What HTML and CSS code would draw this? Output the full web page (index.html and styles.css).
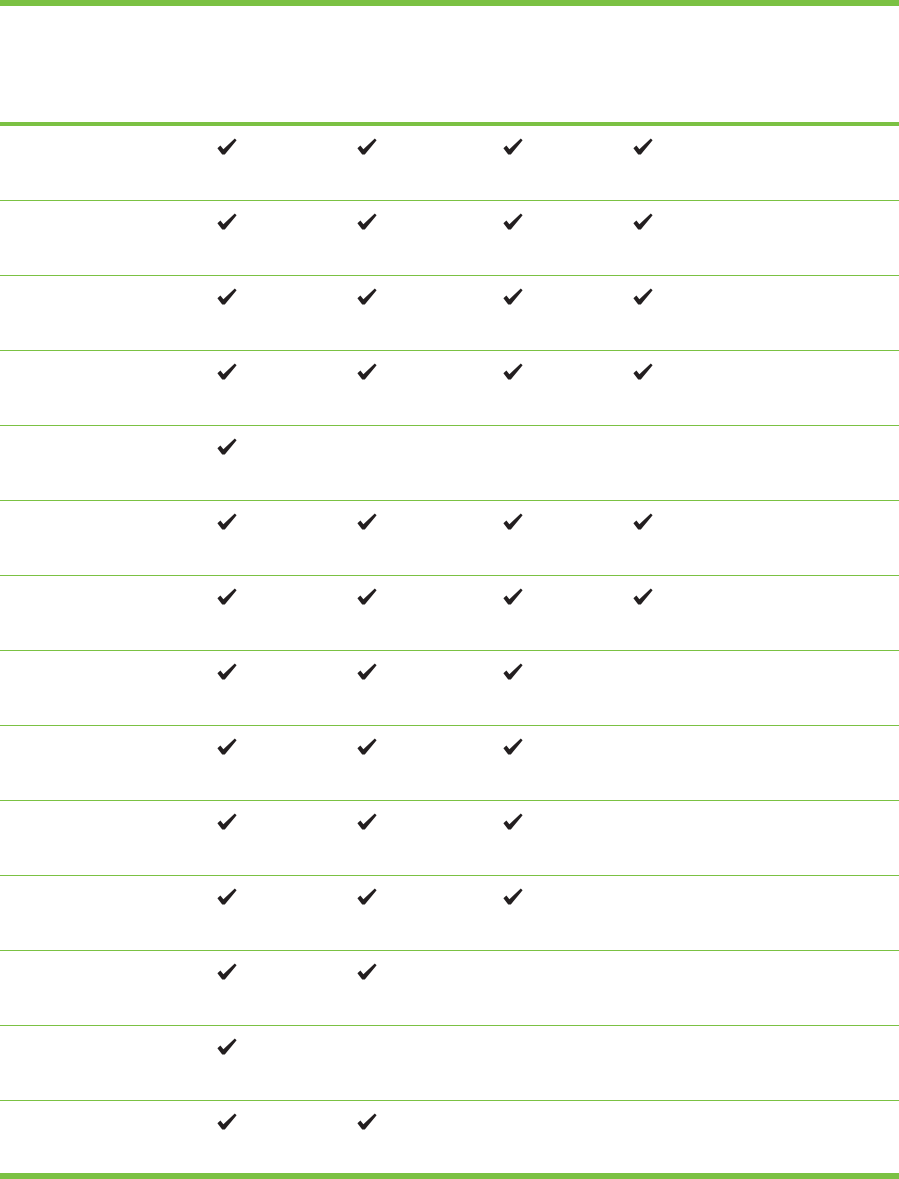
FILE: index.html
```html
<!DOCTYPE html>
<html lang="en">
<head>
<meta charset="utf-8">
<title>Feature matrix</title>
<link rel="stylesheet" href="styles.css">
</head>
<body>
<svg class="defs" width="0" height="0" aria-hidden="true">
  <symbol id="chk" viewBox="0 0 20 17">
    <path d="M0.4 10.2 L3.4 7.6 L6.4 11.2 L17.8 0.4 L19.6 2.2 L7.8 16.6 L5.2 16.6 Z" fill="#231f20"/>
  </symbol>
</svg>
<div class="page">
  <div class="topbar"></div>
  <div class="header"></div>
  <div class="table">
    <div class="row"><span class="label"></span><span class="cell"><svg class="check"><use href="#chk"/></svg></span><span class="cell"><svg class="check"><use href="#chk"/></svg></span><span class="cell"><svg class="check"><use href="#chk"/></svg></span><span class="cell"><svg class="check"><use href="#chk"/></svg></span></div>
    <div class="row"><span class="label"></span><span class="cell"><svg class="check"><use href="#chk"/></svg></span><span class="cell"><svg class="check"><use href="#chk"/></svg></span><span class="cell"><svg class="check"><use href="#chk"/></svg></span><span class="cell"><svg class="check"><use href="#chk"/></svg></span></div>
    <div class="row"><span class="label"></span><span class="cell"><svg class="check"><use href="#chk"/></svg></span><span class="cell"><svg class="check"><use href="#chk"/></svg></span><span class="cell"><svg class="check"><use href="#chk"/></svg></span><span class="cell"><svg class="check"><use href="#chk"/></svg></span></div>
    <div class="row"><span class="label"></span><span class="cell"><svg class="check"><use href="#chk"/></svg></span><span class="cell"><svg class="check"><use href="#chk"/></svg></span><span class="cell"><svg class="check"><use href="#chk"/></svg></span><span class="cell"><svg class="check"><use href="#chk"/></svg></span></div>
    <div class="row"><span class="label"></span><span class="cell"><svg class="check"><use href="#chk"/></svg></span><span class="cell"></span><span class="cell"></span><span class="cell"></span></div>
    <div class="row"><span class="label"></span><span class="cell"><svg class="check"><use href="#chk"/></svg></span><span class="cell"><svg class="check"><use href="#chk"/></svg></span><span class="cell"><svg class="check"><use href="#chk"/></svg></span><span class="cell"><svg class="check"><use href="#chk"/></svg></span></div>
    <div class="row"><span class="label"></span><span class="cell"><svg class="check"><use href="#chk"/></svg></span><span class="cell"><svg class="check"><use href="#chk"/></svg></span><span class="cell"><svg class="check"><use href="#chk"/></svg></span><span class="cell"><svg class="check"><use href="#chk"/></svg></span></div>
    <div class="row"><span class="label"></span><span class="cell"><svg class="check"><use href="#chk"/></svg></span><span class="cell"><svg class="check"><use href="#chk"/></svg></span><span class="cell"><svg class="check"><use href="#chk"/></svg></span><span class="cell"></span></div>
    <div class="row"><span class="label"></span><span class="cell"><svg class="check"><use href="#chk"/></svg></span><span class="cell"><svg class="check"><use href="#chk"/></svg></span><span class="cell"><svg class="check"><use href="#chk"/></svg></span><span class="cell"></span></div>
    <div class="row"><span class="label"></span><span class="cell"><svg class="check"><use href="#chk"/></svg></span><span class="cell"><svg class="check"><use href="#chk"/></svg></span><span class="cell"><svg class="check"><use href="#chk"/></svg></span><span class="cell"></span></div>
    <div class="row"><span class="label"></span><span class="cell"><svg class="check"><use href="#chk"/></svg></span><span class="cell"><svg class="check"><use href="#chk"/></svg></span><span class="cell"><svg class="check"><use href="#chk"/></svg></span><span class="cell"></span></div>
    <div class="row"><span class="label"></span><span class="cell"><svg class="check"><use href="#chk"/></svg></span><span class="cell"><svg class="check"><use href="#chk"/></svg></span><span class="cell"></span><span class="cell"></span></div>
    <div class="row"><span class="label"></span><span class="cell"><svg class="check"><use href="#chk"/></svg></span><span class="cell"></span><span class="cell"></span><span class="cell"></span></div>
    <div class="row last"><span class="label"></span><span class="cell"><svg class="check"><use href="#chk"/></svg></span><span class="cell"><svg class="check"><use href="#chk"/></svg></span><span class="cell"></span><span class="cell"></span></div>
  </div>
  <div class="bottombar"></div>
</div>
</body>
</html>
```
FILE: styles.css
```css
* { box-sizing: border-box; }
html, body { margin: 0; padding: 0; background: #ffffff; }
body { font-family: "Liberation Sans", Arial, sans-serif; }
.defs { position: absolute; width: 0; height: 0; overflow: hidden; }
.page { width: 899px; height: 1179px; display: flex; flex-direction: column; }
.topbar { height: 6px; background: #7bc143; flex: none; }
.header { height: 120px; border-bottom: 4px solid #7bc143; flex: none; }
.table { display: flex; flex-direction: column; flex: 1; }
.row {
  display: grid;
  grid-template-columns: 217px 140px 146px 130px 1fr;
  height: 75px;
  border-top: 1px solid #7bc143;
  padding-top: 12px;
}
.row:first-child { border-top: none; height: 74px; }
.row.last { height: auto; flex: 1; }
.cell { display: block; height: 17px; }
.check { width: 20px; height: 17px; display: block; }
.bottombar { height: 6px; background: #7bc143; flex: none; }
```
